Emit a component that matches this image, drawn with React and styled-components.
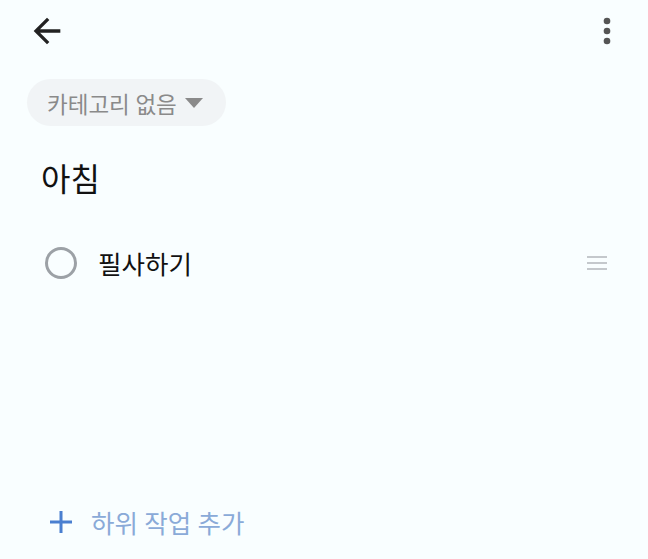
import React from 'react'
import styled, { createGlobalStyle } from 'styled-components'

const Global = createGlobalStyle`
body{
margin:0;
background:#F9FEFF;
font-family:Roboto, "Noto Sans CJK KR", sans-serif;
}
`;

const BackIcon = () => (
    <svg width="40" height="40" viewBox="0 0 24 24">
        <path d="M20 11H7.83l5.59-5.59L12 4l-8 8 8 8 1.41-1.41L7.83 13H20v-2z" fill="#222" />
    </svg>
)

const MoreIcon = () => (
    <svg width="40" height="40" viewBox="0 0 24 24" fill="#555">
        <circle cx="12" cy="6" r="2" />
        <circle cx="12" cy="12" r="2" />
        <circle cx="12" cy="18" r="2" />
    </svg>
)

const Caret = () => (
    <svg width="18" height="10" viewBox="0 0 18 10">
        <path d="M0 0h18L9 10z" fill="#8a8a8a" />
    </svg>
)

const Handle = () => (
    <svg width="20" height="16" viewBox="0 0 20 16" fill="#c4c8cc">
        <rect x="0" y="1" width="20" height="2" />
        <rect x="0" y="7" width="20" height="2" />
        <rect x="0" y="13" width="20" height="2" />
    </svg>
)

const PlusIcon = () => (
    <svg width="24" height="24" viewBox="0 0 24 24">
        <path d="M12 1v22M1 12h22" stroke="#4a7fd0" strokeWidth="3" />
    </svg>
)

export default function App() {
    return (
        <Page>
            <Global />
            <TopBar>
                <IconButton><BackIcon /></IconButton>
                <IconButton><MoreIcon /></IconButton>
            </TopBar>
            <Body>
                <Pill>
                    카테고리 없음
                    <Caret />
                </Pill>
                <Title>아침</Title>
                <TaskRow>
                    <Check />
                    <TaskText>필사하기</TaskText>
                    <Handle />
                </TaskRow>
            </Body>
            <AddRow>
                <PlusIcon />
                <AddText>하위 작업 추가</AddText>
            </AddRow>
        </Page>
    )
}

const Page = styled.div`
width:648px;
height:559px;
display:flex;
flex-direction:column;
box-sizing:border-box;
`;
const TopBar = styled.div`
display:flex;
justify-content:space-between;
align-items:center;
padding:11px 21px 0 27px;
`;
const IconButton = styled.div`
width:40px;
height:40px;
display:flex;
`;
const Body = styled.div`
flex:1;
display:flex;
flex-direction:column;
align-items:flex-start;
padding:0 41px 0 27px;
`;
const Pill = styled.div`
margin-top:28px;
height:47px;
padding:0 23px 0 20px;
border-radius:24px;
background:#F1F4F6;
display:flex;
align-items:center;
gap:8px;
font-size:22.5px;
color:#8a8a8a;
`;
const Title = styled.div`
margin:34px 0 0 14px;
font-size:32px;
color:#111;
line-height:40px;
`;
const TaskRow = styled.div`
align-self:stretch;
margin-top:44px;
display:flex;
align-items:center;
padding-left:18px;
`;
const Check = styled.div`
width:26px;
height:26px;
border:3px solid #9ca1a6;
border-radius:50%;
`;
const TaskText = styled.div`
flex:1;
margin-left:21px;
font-size:25.5px;
color:#111;
`;
const AddRow = styled.div`
display:flex;
align-items:center;
gap:18px;
padding:0 0 19px 49px;
`;
const AddText = styled.div`
font-size:25.5px;
color:#8aaad8;
`;
